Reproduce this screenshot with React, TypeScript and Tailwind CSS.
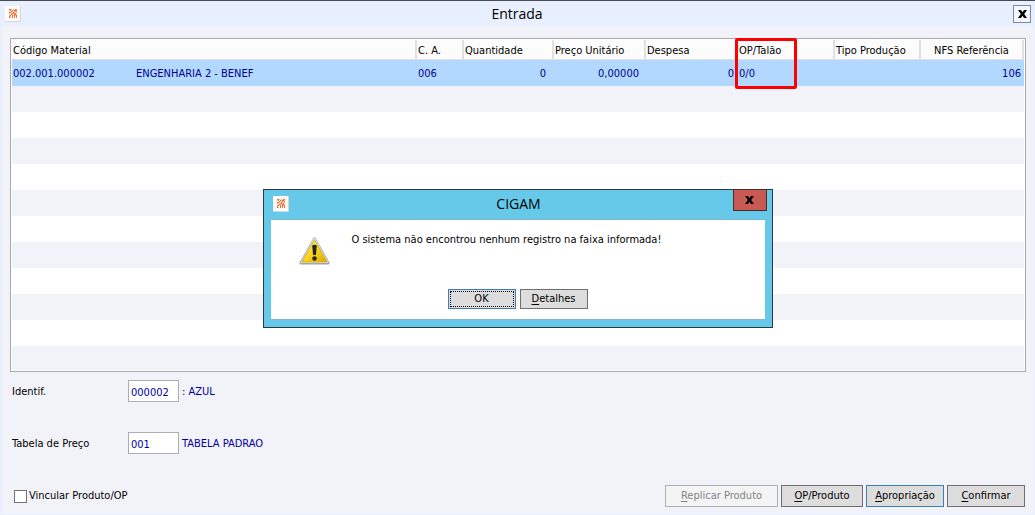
import React, { useState } from 'react';
import { clsx } from 'clsx';

interface MaterialRow {
  code: string;
  description: string;
  ca: string;
  quantity: string;
  unitPrice: string;
  expense: string;
  opTalao: string;
  productionType: string;
  nfsReference: string;
}

const rows: MaterialRow[] = [
  {
    code: '002.001.000002',
    description: 'ENGENHARIA 2 - BENEF',
    ca: '006',
    quantity: '0',
    unitPrice: '0,00000',
    expense: '0',
    opTalao: '0/0',
    productionType: '',
    nfsReference: '106'
  }
];

const emptyRows = Array.from({ length: 11 }, (_, i) => i);

// # is a solid dot, + a lighter one
const logoDots = [
  '##+.+.##',
  '+#.#+##+',
  '..#+.#+#',
  '##+.#+.+',
  '+.+##+#.',
  '.+#+.##+',
  '+#.#+#+#',
  '#+.#.#.#',
  '#+.#.#.#'
];

const AppLogo: React.FC = () => (
  <svg className="h-4 w-4 shrink-0" viewBox="0 0 16 16" aria-hidden="true">
    <rect width="16" height="16" rx="1" fill="#d5d6da" />
    <rect width="15" height="15" rx="1" fill="#fffdfb" />
    {logoDots.map((line, y) =>
      line.split('').map((dot, x) =>
        dot === '.' ? null : (
          <rect
            key={`${x}-${y}`}
            x={4 + x}
            y={3 + y}
            width="1"
            height="1"
            fill={dot === '#' ? '#f4703a' : '#fbb48f'}
          />
        )
      )
    )}
  </svg>
);

const CloseGlyph: React.FC = () => (
  <svg className="h-2 w-[9px]" viewBox="0 0 9 8" aria-hidden="true">
    <path d="M0 0h3l1.500 2.300L6 0h3L6.200 4 9 8H6L4.500 5.700 3 8H0l2.800-4z" fill="#000" />
  </svg>
);

const WarningIcon: React.FC = () => (
  <svg className="h-[30px] w-8 shrink-0" viewBox="0 0 32 30" aria-hidden="true">
    <defs>
      <linearGradient id="warn-fill" x1="0" y1="0" x2="1" y2="1">
        <stop offset="0" stopColor="#fff27a" />
        <stop offset="0.5" stopColor="#fbd51c" />
        <stop offset="1" stopColor="#e0aa00" />
      </linearGradient>
      <linearGradient id="warn-edge" x1="0" y1="0" x2="0" y2="1">
        <stop offset="0" stopColor="#c2c4c6" />
        <stop offset="1" stopColor="#a2a5a8" />
      </linearGradient>
    </defs>
    <path d="M15.500 2.500 29 27H2z" fill="#e5e6e7" stroke="url(#warn-edge)" strokeWidth="3" strokeLinejoin="round" />
    <path d="M15.500 2.500 29 26.500H2z" fill="none" stroke="#dfe0e1" strokeLinejoin="round" />
    <path d="M15.500 4 28 26H3z" fill="url(#warn-fill)" stroke="#d9ab10" strokeWidth="0.7" strokeLinejoin="round" />
    <path d="M13.200 9.500q2.300-1.500 4.600 0l-.9 9.500h-2.800z" fill="#1f2428" />
    <circle cx="15.500" cy="22.500" r="2.200" fill="#1f2428" />
  </svg>
);

interface WinButtonProps {
  label: string;
  className?: string;
  disabled?: boolean;
}

const WinButton: React.FC<WinButtonProps> = ({ label, className, disabled }) => (
  <button
    type="button"
    disabled={disabled}
    className={clsx(
      'flex items-center justify-center border whitespace-nowrap',
      disabled ? 'border-[#adb2b5] bg-[#f4f4f4] text-[#838383]' : 'bg-[#dddddd] text-black',
      className
    )}
  >
    <span>
      <span className="underline underline-offset-2">{label[0]}</span>
      {label.slice(1)}
    </span>
  </button>
);

const MaterialTable: React.FC = () => {
  const th = 'h-5 border-r-2 border-b border-[#e0e0e0] bg-[#fcfcfc] p-0 pt-0.5 pl-px text-left font-normal';
  const td = 'h-[26px] p-0 pt-0.5 pl-px';
  const tdRight = 'h-[26px] p-0 pt-0.5 text-right';

  return (
    <div className="border border-[#a7a8b0] bg-white p-px">
      <table className="w-full table-fixed border-separate border-spacing-0 whitespace-nowrap">
        <colgroup>
          <col className="w-[123px]" />
          <col />
          <col className="w-[47px]" />
          <col className="w-[90px]" />
          <col className="w-[92px]" />
          <col className="w-[91px]" />
          <col className="w-[98px]" />
          <col className="w-[86px]" />
          <col className="w-[103px]" />
        </colgroup>
        <thead className="leading-[15px]">
          <tr>
            <th colSpan={2} className={th}>Código Material</th>
            <th className={th}>C. A.</th>
            <th className={th}>Quantidade</th>
            <th className={th}>Preço Unitário</th>
            <th className={th}>Despesa</th>
            <th className={clsx(th, 'relative')}>
              <span className="pl-px">OP/Talão</span>
              {/* Highlight around the OP/Talão column */}
              <span className="pointer-events-none absolute -top-0.5 -left-0.5 h-[51px] w-[62px] rounded-xs border-3 border-[#ff0000]" />
            </th>
            <th className={th}>Tipo Produção</th>
            <th className="h-5 border-r-2 border-b border-[#e0e0e0] bg-[#fcfcfc] p-0 pt-0.5 text-center font-normal">
              NFS Referência
            </th>
          </tr>
        </thead>
        <tbody>
          {rows.map((row) => (
            <tr key={row.code} className="bg-[#b2d8ff] text-[#00008f]">
              <td className={td}>{row.code}</td>
              <td className={td}>{row.description}</td>
              <td className={td}>{row.ca}</td>
              <td className={clsx(tdRight, 'pr-2')}>{row.quantity}</td>
              <td className={clsx(tdRight, 'pr-[7px]')}>{row.unitPrice}</td>
              <td className={clsx(tdRight, 'pr-[3px]')}>{row.expense}</td>
              <td className={td}>
                <span className="pl-px">{row.opTalao}</span>
              </td>
              <td className={td}>{row.productionType}</td>
              <td className={clsx(tdRight, 'pr-[3px]')}>{row.nfsReference}</td>
            </tr>
          ))}
          {emptyRows.map((i) => (
            <tr key={i} className="odd:bg-white even:bg-[#f2f3f9]">
              <td colSpan={9} className={i === 10 ? 'h-6 p-0' : 'h-[26px] p-0'} />
            </tr>
          ))}
        </tbody>
      </table>
    </div>
  );
};

interface FieldProps {
  id: string;
  label: string;
  value: string;
  description: string;
}

const Field: React.FC<FieldProps> = ({ id, label, value, description }) => (
  <div className="flex items-center">
    <label htmlFor={id} className="w-[116px] pt-0.5">{label}</label>
    <input
      id={id}
      defaultValue={value}
      className="h-[22px] w-[51px] border border-[#abadb3] bg-white px-0.5 pt-0.5 text-[#00009f] outline-none"
    />
    <span className="ml-[3px] pt-0.5 text-[#00009f]">{description}</span>
  </div>
);

interface MessageDialogProps {
  onClose: () => void;
}

const MessageDialog: React.FC<MessageDialogProps> = ({ onClose }) => (
  <div className="absolute inset-0 flex items-center justify-center">
    <div
      role="dialog"
      aria-labelledby="dialog-title"
      className="relative w-[510px] border border-[#2b3a42] bg-[#66c9ea] px-[7px] pb-[7px]"
    >
      <header className="flex h-[29px] items-center pl-0.5">
        <AppLogo />
        <h2 id="dialog-title" className="flex-1 pr-4 text-center font-[Open_Sans,sans-serif] text-[14px]">
          CIGAM
        </h2>
      </header>
      <button
        type="button"
        aria-label="Fechar mensagem"
        onClick={onClose}
        className="absolute -top-px right-[5px] flex h-[22px] w-[34px] items-center justify-center border border-[#4d2b2b] bg-[#c75b53]"
      >
        <CloseGlyph />
      </button>
      <div className="border-y border-[#85b5ca] bg-white pt-3 pb-[10px]">
        <div className="flex pl-7">
          <div className="pt-1">
            <WarningIcon />
          </div>
          <p className="ml-[21px]">O sistema não encontrou nenhum registro na faixa informada!</p>
        </div>
        <div className="mt-[23px] flex justify-center gap-1">
          <button
            type="button"
            onClick={onClose}
            className="h-5 w-[68px] border border-[#3c7fb1] bg-[#dddddd] p-px"
          >
            <span className="flex h-full items-center justify-center border border-dotted border-black">OK</span>
          </button>
          <WinButton label="Detalhes" className="h-5 w-[68px] border-[#707070]" />
        </div>
      </div>
    </div>
  </div>
);

const App: React.FC = () => {
  const [dialogOpen, setDialogOpen] = useState(true);

  return (
    <div className="relative flex min-h-screen flex-col border-t border-t-[#4a4a52] bg-[#e8efff] pr-px pb-px pl-0.5 font-[DejaVu_Sans_Condensed,sans-serif] text-[11px] leading-4 text-black">
      <header className="flex h-[25px] items-center pr-[3px] pl-[3px]">
        <AppLogo />
        <h1 className="flex-1 text-center font-[Open_Sans,sans-serif] text-[14px]">Entrada</h1>
        <button
          type="button"
          aria-label="Fechar"
          className="flex h-[18px] w-[18px] items-center justify-center border border-[#7a88a8] bg-[#f4f7ff]"
        >
          <CloseGlyph />
        </button>
      </header>

      <main className="flex flex-1 flex-col bg-[#f2f3f9] px-2 pt-3 pb-[7px]">
        <MaterialTable />

        <div className="mt-2 flex flex-col gap-[30px] pl-0.5">
          <Field id="identif" label="Identif." value="000002" description=": AZUL" />
          <Field id="tabela-preco" label="Tabela de Preço" value="001" description="TABELA PADRAO" />
        </div>

        <footer className="mt-auto flex items-center justify-between pr-px pl-1">
          <label className="flex items-center gap-0.5">
            <input
              type="checkbox"
              className="h-[13px] w-[13px] appearance-none border border-[#707070] bg-white checked:bg-[#3c7fb1]"
            />
            Vincular Produto/OP
          </label>
          <div className="flex gap-[3px]">
            <WinButton label="Replicar Produto" disabled className="h-[22px] w-[113px]" />
            <WinButton label="OP/Produto" className="h-[22px] w-[82px] border-[#707070]" />
            <WinButton label="Apropriação" className="h-[22px] w-[78px] border-[#3c7fb1]" />
            <WinButton label="Confirmar" className="h-[22px] w-[78px] border-[#707070]" />
          </div>
        </footer>
      </main>

      {dialogOpen && <MessageDialog onClose={() => setDialogOpen(false)} />}
    </div>
  );
};

export default App;
